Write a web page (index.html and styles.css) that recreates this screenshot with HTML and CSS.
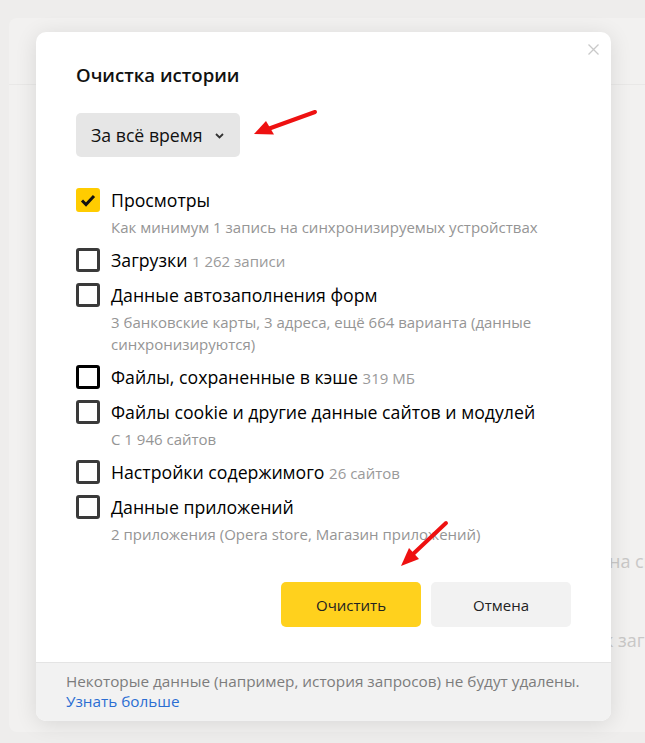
FILE: index.html
```html
<!DOCTYPE html>
<html lang="ru">
<head>
<meta charset="utf-8">
<title>Очистка истории</title>
<link rel="stylesheet" href="styles.css">
</head>
<body>
<div class="page">
  <div class="back">
    <div class="back-head"></div>
    <div class="back-lines">
      <div class="back-line l1">на синхронизируемых</div>
      <div class="back-line l2">к загрузкам</div>
    </div>
  </div>

  <div class="modal">
    <div class="modal-body">
      <button class="close" aria-label="Закрыть">
        <svg width="11" height="11" viewBox="0 0 11 11"><path d="M0.5 0.5 L10.5 10.5 M10.5 0.5 L0.5 10.5" stroke="#c9c9c9" stroke-width="1.3" fill="none"/></svg>
      </button>
      <h1 class="title">Очистка истории</h1>
      <div class="select">
        <span>За всё время</span>
        <svg class="chev" width="9" height="6" viewBox="0 0 9 6"><path d="M1 1 L4.5 4.5 L8 1" stroke="#333" stroke-width="1.8" fill="none"/></svg>
      </div>

      <ul class="list">
        <li class="item">
          <span class="box checked"><svg width="16" height="13" viewBox="0 0 16 13"><path d="M2 6.5 L6 10.5 L14 2" stroke="#111" stroke-width="3" fill="none"/></svg></span>
          <div class="text">
            <div class="label">Просмотры</div>
            <div class="sub">Как минимум 1 запись на синхронизируемых устройствах</div>
          </div>
        </li>
        <li class="item">
          <span class="box"></span>
          <div class="text">
            <div class="label">Загрузки <span class="count">1 262 записи</span></div>
          </div>
        </li>
        <li class="item">
          <span class="box"></span>
          <div class="text">
            <div class="label">Данные автозаполнения форм</div>
            <div class="sub">3 банковские карты, 3 адреса, ещё 664 варианта (данные синхронизируются)</div>
          </div>
        </li>
        <li class="item">
          <span class="box focus"></span>
          <div class="text">
            <div class="label">Файлы, сохраненные в кэше <span class="count">319 МБ</span></div>
          </div>
        </li>
        <li class="item">
          <span class="box"></span>
          <div class="text">
            <div class="label">Файлы cookie и другие данные сайтов и модулей</div>
            <div class="sub">С 1 946 сайтов</div>
          </div>
        </li>
        <li class="item">
          <span class="box"></span>
          <div class="text">
            <div class="label">Настройки содержимого <span class="count">26 сайтов</span></div>
          </div>
        </li>
        <li class="item">
          <span class="box"></span>
          <div class="text">
            <div class="label">Данные приложений</div>
            <div class="sub">2 приложения (Opera store, Магазин приложений)</div>
          </div>
        </li>
      </ul>

      <div class="actions">
        <button class="btn primary">Очистить</button>
        <button class="btn">Отмена</button>
      </div>
    </div>
    <div class="modal-foot">
      <div>Некоторые данные (например, история запросов) не будут удалены.</div>
      <a class="link" href="#">Узнать больше</a>
    </div>
  </div>

  <svg class="arrows" width="645" height="743" viewBox="0 0 645 743">
    <line x1="315" y1="112" x2="268" y2="129" stroke="#ee1111" stroke-width="4" stroke-linecap="round"/>
    <polygon points="254,134 274,134.5 266,121" fill="#ee1111"/>
    <line x1="446" y1="523" x2="412" y2="555" stroke="#ee1111" stroke-width="4" stroke-linecap="round"/>
    <polygon points="401,566 419,559 409,548" fill="#ee1111"/>
  </svg>
</div>
</body>
</html>
```

FILE: styles.css
```css
* { box-sizing: border-box; }
html, body {
  margin: 0;
  padding: 0;
  background: #eeedec;
}
body {
  font-family: "Open Sans", "Noto Sans", "Liberation Sans", sans-serif;
  color: #000;
}
.page {
  position: relative;
  width: 645px;
  height: 743px;
  overflow: hidden;
}
.back {
  margin: 18px 0 0 9px;
  height: 714px;
  background: #f2f1f0;
  border-radius: 8px 0 0 8px;
  overflow: hidden;
}
.back-head {
  height: 67px;
  border-bottom: 1px solid #e9e8e7;
}
.back-lines {
  padding-top: 464px;
}
.back-line {
  font-size: 18px;
  line-height: 24px;
  color: #c9c8c7;
  white-space: nowrap;
}
.back-line.l1 { padding-left: 600px; }
.back-line.l2 { padding-left: 595px; margin-top: 55px; }

.modal {
  position: absolute;
  left: 36px;
  top: 32px;
  width: 575px;
  background: #fff;
  border-radius: 10px;
  overflow: hidden;
  box-shadow: 0 3px 22px rgba(0, 0, 0, 0.11);
}
.modal-body {
  position: relative;
  padding: 30px 40px 35px;
}
.close {
  position: absolute;
  top: 12px;
  right: 12px;
  width: 11px;
  height: 11px;
  padding: 0;
  border: 0;
  background: none;
  display: block;
}
.close svg { display: block; }
.title {
  margin: 0;
  font-size: 18.6px;
  line-height: 24px;
  font-weight: 600;
  color: #111;
  padding-top: 1px;
}
.select {
  margin-top: 26px;
  width: 164px;
  height: 44px;
  background: #e6e6e6;
  border-radius: 5px;
  display: flex;
  align-items: center;
  padding: 0 15px;
  font-size: 17.7px;
  color: #111;
}
.chev { margin-left: 12px; margin-top: 1px; }
.list {
  list-style: none;
  margin: 31px 0 0;
  padding: 0;
}
.item {
  display: flex;
  gap: 11px;
  margin-bottom: 11px;
}
.box {
  flex: none;
  width: 24px;
  height: 24px;
  border: 3px solid #3a3a3a;
  border-radius: 3px;
  display: flex;
  align-items: center;
  justify-content: center;
}
.box.checked {
  background: #ffcc00;
  border-color: #ffcc00;
}
.box.focus { border-color: #000; }
.label {
  font-size: 17.7px;
  line-height: 24px;
  height: 24px;
  color: #000;
  white-space: nowrap;
}
.count {
  font-size: 15px;
  line-height: 1;
  color: #9a9a9a;
}
.sub {
  margin-top: 4px;
  margin-bottom: -1px;
  font-size: 15px;
  line-height: 22px;
  color: #959595;
}
.actions {
  display: flex;
  justify-content: flex-end;
  gap: 10px;
  padding-top: 27px;
}
.btn {
  width: 140px;
  height: 45px;
  border: 0;
  border-radius: 5px;
  background: #f2f2f2;
  font-family: inherit;
  font-size: 15px;
  color: #222;
}
.btn.primary { background: #ffd11d; }
.modal-foot {
  background: #f2f2f2;
  border-top: 1px solid #e4e4e4;
  padding: 8px 30px 10px;
  font-size: 15.3px;
  line-height: 20px;
  color: #7c7c7c;
}
.link {
  color: #2b6ed2;
  text-decoration: none;
}
.arrows {
  position: absolute;
  left: 0;
  top: 0;
  pointer-events: none;
}
```
